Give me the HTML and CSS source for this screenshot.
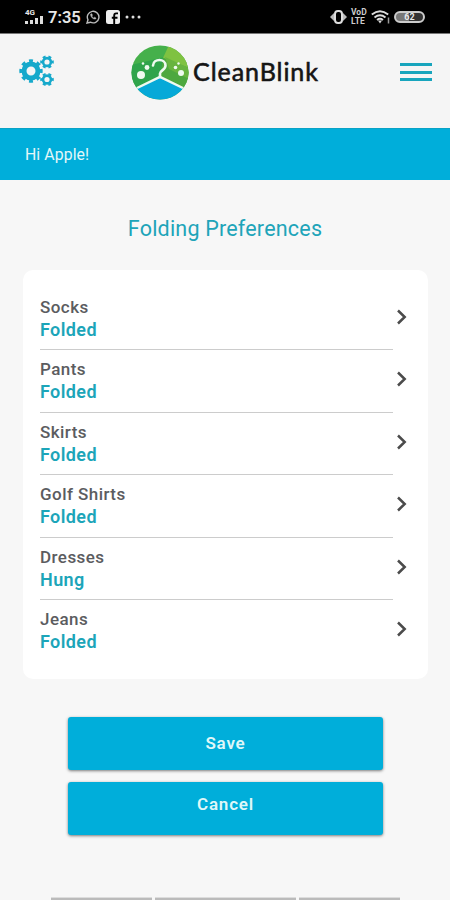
FILE: index.html
```html
<!DOCTYPE html>
<html lang="en">
<head>
<meta charset="utf-8">
<title>Folding Preferences</title>
<link rel="stylesheet" href="styles.css">
</head>
<body>
<div class="status">
  <div class="status-left">
    <div class="signal"><span class="net">4G</span>
      <svg width="19" height="8" viewBox="0 0 19 8" fill="#ddd"><path d="M0 5h3v3H0zM5 4h3v4H5zM10 2h3v6h-3zM15 0h3v8h-3z"/></svg>
    </div>
    <span class="clock">7:35</span>
    <svg class="wa" width="14" height="14" viewBox="0 0 14 14" fill="none" stroke="#bbb" stroke-width="1.400"><path d="M1 13l1-3.200A5.800 5.800 0 1 1 4.400 12.200z"/><path d="M4.700 4c-.6 2.500 2.300 5.600 5 5l.3-1-1.700-.8-.8.7C6.500 7.400 6 6.700 5.800 6l.7-.7L5.800 3.700z" fill="#bbb" stroke-width=".5"/></svg>
    <svg class="fb" width="14" height="14" viewBox="0 0 14 14"><rect width="14" height="14" rx="2.500" fill="#eee"/><path d="M8.200 14V5.600c0-1.500.6-2.200 2-2.200H12M5.800 7.700h5.700" fill="none" stroke="#000" stroke-width="1.900"/></svg>
    <svg class="dots" width="16" height="4" viewBox="0 0 16 4" fill="#ddd"><circle cx="2" cy="2" r="1.500"/><circle cx="8" cy="2" r="1.500"/><circle cx="14" cy="2" r="1.500"/></svg>
  </div>
  <div class="status-right">
    <svg width="17" height="14" viewBox="0 0 17 14"><path d="M4 3L0 7l4 4zM13 3l4 4-4 4z" fill="#bbb"/><rect x="5" y="1" width="7" height="12" rx="3" fill="none" stroke="#ddd" stroke-width="2"/></svg>
    <div class="volte"><span>VoD</span><span>LTE</span></div>
    <svg class="wifi" width="20" height="14" viewBox="0 0 20 14" fill="none" stroke="#ddd" stroke-width="1.900"><path d="M.8 4.500Q9 -2.200 17.200 4.500M3.500 7.400Q9 3 14.500 7.400M6 10Q9 7.700 12 10"/><path d="M7 10.500h4l-2 3z" fill="#ddd" stroke="none"/><path d="M17.500 7.500v6" stroke="#999" stroke-width="1.500"/></svg>
    <div class="battery">62</div>
  </div>
</div>

<header class="header">
  <svg class="gears" width="36" height="32" viewBox="0 0 36 32" fill="none" stroke="#16a9cb">
    <g transform="translate(12 16)"><circle r="7" stroke-width="5"/><circle r="10.200" stroke-width="3" pathLength="16" stroke-dasharray="1 1" stroke-dashoffset=".5"/></g>
    <g transform="translate(28 7)"><circle r="3.900" stroke-width="2.600"/><circle r="5.700" stroke-width="2.200" pathLength="12" stroke-dasharray="1 1" stroke-dashoffset=".5"/></g>
    <g transform="translate(28 24.500)"><circle r="3.900" stroke-width="2.600"/><circle r="5.700" stroke-width="2.200" pathLength="12" stroke-dasharray="1 1" stroke-dashoffset=".5"/></g>
  </svg>
  <div class="brand">
    <svg width="58" height="56" viewBox="0 0 58 56">
      <defs><clipPath id="disc"><ellipse cx="29" cy="27.500" rx="28.500" ry="27"/></clipPath></defs>
      <g clip-path="url(#disc)">
        <path d="M0 0h58v56H0z" fill="#45b04b"/>
        <path d="M0 20L34 12 29 34 0 50z" fill="#2fa44b"/>
        <path d="M38 0h20v23L32 13z" fill="#7fc241"/>
        <path d="M32 13l26 10v25L29 33z" fill="#4da83f"/>
        <path d="M34 12l24 11v11L38 24z" fill="#68b43f"/>
        <path d="M0 46L29 32l29 14v10H0z" fill="#06a9d8"/>
        <path d="M3 44.500L29 31.800l26 12.700" fill="none" stroke="#effaf0" stroke-width="2.400"/>
      </g>
      <path d="M29 32v-3.500c0-3 5.500-3.500 5.500-8 0-7.300-12-7.300-12.500 0" fill="none" stroke="#effaf0" stroke-width="2.600" stroke-linecap="round"/>
      <g fill="#effaf0"><circle cx="10" cy="30" r="4"/><circle cx="16" cy="22.500" r="2.400"/><circle cx="12" cy="18.500" r="1.300"/><circle cx="50" cy="28" r="3"/><circle cx="44.500" cy="22.500" r="1.800"/><circle cx="47.500" cy="18.500" r="1.200"/></g>
    </svg>
    <span class="name">CleanBlink</span>
  </div>
  <div class="menu"><i></i><i></i><i></i></div>
</header>

<div class="greeting">Hi Apple!</div>
<h1>Folding Preferences</h1>

<main class="card">
  <div class="row"><div class="item"><span>Socks</span><b>Folded</b></div><svg class="chev" viewBox="0 0 12 16"><path d="M2 1.500L8.700 8 2 14.500"/></svg></div>
  <div class="row"><div class="item"><span>Pants</span><b>Folded</b></div><svg class="chev" viewBox="0 0 12 16"><path d="M2 1.500L8.700 8 2 14.500"/></svg></div>
  <div class="row"><div class="item"><span>Skirts</span><b>Folded</b></div><svg class="chev" viewBox="0 0 12 16"><path d="M2 1.500L8.700 8 2 14.500"/></svg></div>
  <div class="row"><div class="item"><span>Golf Shirts</span><b>Folded</b></div><svg class="chev" viewBox="0 0 12 16"><path d="M2 1.500L8.700 8 2 14.500"/></svg></div>
  <div class="row"><div class="item"><span>Dresses</span><b>Hung</b></div><svg class="chev" viewBox="0 0 12 16"><path d="M2 1.500L8.700 8 2 14.500"/></svg></div>
  <div class="row"><div class="item"><span>Jeans</span><b>Folded</b></div><svg class="chev" viewBox="0 0 12 16"><path d="M2 1.500L8.700 8 2 14.500"/></svg></div>
</main>

<div class="actions">
  <button class="save">Save</button>
  <button class="cancel">Cancel</button>
</div>
<div class="tabs"><i></i><i></i><i></i></div>
</body>
</html>
```
FILE: styles.css
```css
* { box-sizing: border-box; }
body {
  margin: 0;
  height: 900px;
  display: flex;
  flex-direction: column;
  overflow: hidden;
  background: #f7f7f7;
  font-family: Roboto, sans-serif;
}
svg { display: block; flex: none; }
.status {
  height: 34px;
  flex: none;
  display: flex;
  justify-content: space-between;
  padding: 0 25px;
  background: #000;
  border-bottom: 1px solid #777;
  color: #e8e8e8;
}
.status-left, .status-right { display: flex; align-items: center; height: 34px; }
.signal { width: 19px; margin-top: -2px; }
.net { display: block; font-size: 8px; line-height: 7px; font-weight: 700; }
.clock { width: 33px; margin-left: 4px; font-size: 16.500px; font-weight: 600; }
.wa { margin-left: 5px; }
.fb { margin-left: 6px; }
.dots { margin-left: 5px; }
.volte {
  display: flex;
  flex-direction: column;
  margin-left: 4px;
  width: 17px;
  font-size: 8.500px;
  line-height: 9px;
  font-weight: 700;
  color: #ccc;
}
.wifi { margin-left: 3px; }
.battery {
  width: 31px;
  height: 12px;
  margin-left: 3px;
  border: 2px solid #ccc;
  border-radius: 6px;
  font-size: 9px;
  line-height: 8px;
  font-weight: 700;
  text-align: center;
  background: linear-gradient(90deg, #777 50%, #333 50%);
}
.header {
  height: 94px;
  flex: none;
  display: flex;
  align-items: flex-start;
  background: #f5f5f5;
}
.gears { margin: 21px 0 0 19px; }
.brand { display: flex; align-items: flex-start; margin: 11px 0 0 76px; width: 190px; }
.name {
  margin: 11px 0 0 4px;
  font-family: Lato, sans-serif;
  font-size: 25px;
  line-height: 30px;
  color: #151515;
  -webkit-text-stroke: .6px #151515;
  letter-spacing: .95px;
}
.menu { display: flex; flex-direction: column; gap: 4.500px; margin: 29px 0 0 79px; width: 32px; }
.menu i { height: 3px; background: #18a5bd; }
.greeting {
  height: 52px;
  flex: none;
  padding: 16px 25px;
  background: #00aeda;
  border-top: 1px solid #0aa2c5;
  color: #e3f7f8;
  font-size: 15.800px;
  line-height: 19px;
  letter-spacing: .1px;
}
h1 {
  flex: none;
  margin: 35px 0 27px;
  color: #20a4b9;
  font-size: 21.500px;
  line-height: 28px;
  font-weight: 400;
  text-align: center;
  letter-spacing: .2px;
}
.card {
  height: 409px;
  flex: none;
  margin: 0 22px 0 23px;
  padding: 18px 17px 0;
  border-radius: 10px;
  background: #fff;
}
.row { height: 62.400px; display: flex; align-items: flex-start; }
.item {
  width: 353px;
  height: 62.400px;
  padding-top: 8px;
  border-bottom: 1.500px solid #ccc;
}
.row:last-child .item { border-bottom: 0; }
.item span {
  display: block;
  color: #5b5c60;
  font-size: 17px;
  line-height: 22px;
  font-weight: 500;
  letter-spacing: .45px;
}
.item b {
  display: block;
  color: #1ca5b9;
  font-size: 18px;
  line-height: 24px;
  font-weight: 600;
  letter-spacing: .4px;
}
.chev { width: 12px; height: 16px; margin: 21px 0 0 3px; fill: none; stroke: #4b4b4b; stroke-width: 2.500; }
.actions {
  display: flex;
  flex-direction: column;
  flex: none;
  gap: 12px;
  width: 315px;
  margin: 38px 0 0 68px;
}
button {
  height: 53px;
  padding: 0 0 2px;
  border: 0;
  border-radius: 3px;
  background: #00aeda;
  box-shadow: 0 1px 3px rgba(0, 0, 0, .5);
  color: #dff7f8;
  font: 600 17px/20px Roboto, sans-serif;
  letter-spacing: .8px;
}
.cancel { padding-bottom: 10px; }
.tabs { display: flex; gap: 3px; margin: auto 0 0 51px; width: 349px; }
.tabs i { height: 3px; width: 102px; background: #bbb; border-top: 1px solid #ddd; }
.tabs i:nth-child(2) { width: 141px; }
```
